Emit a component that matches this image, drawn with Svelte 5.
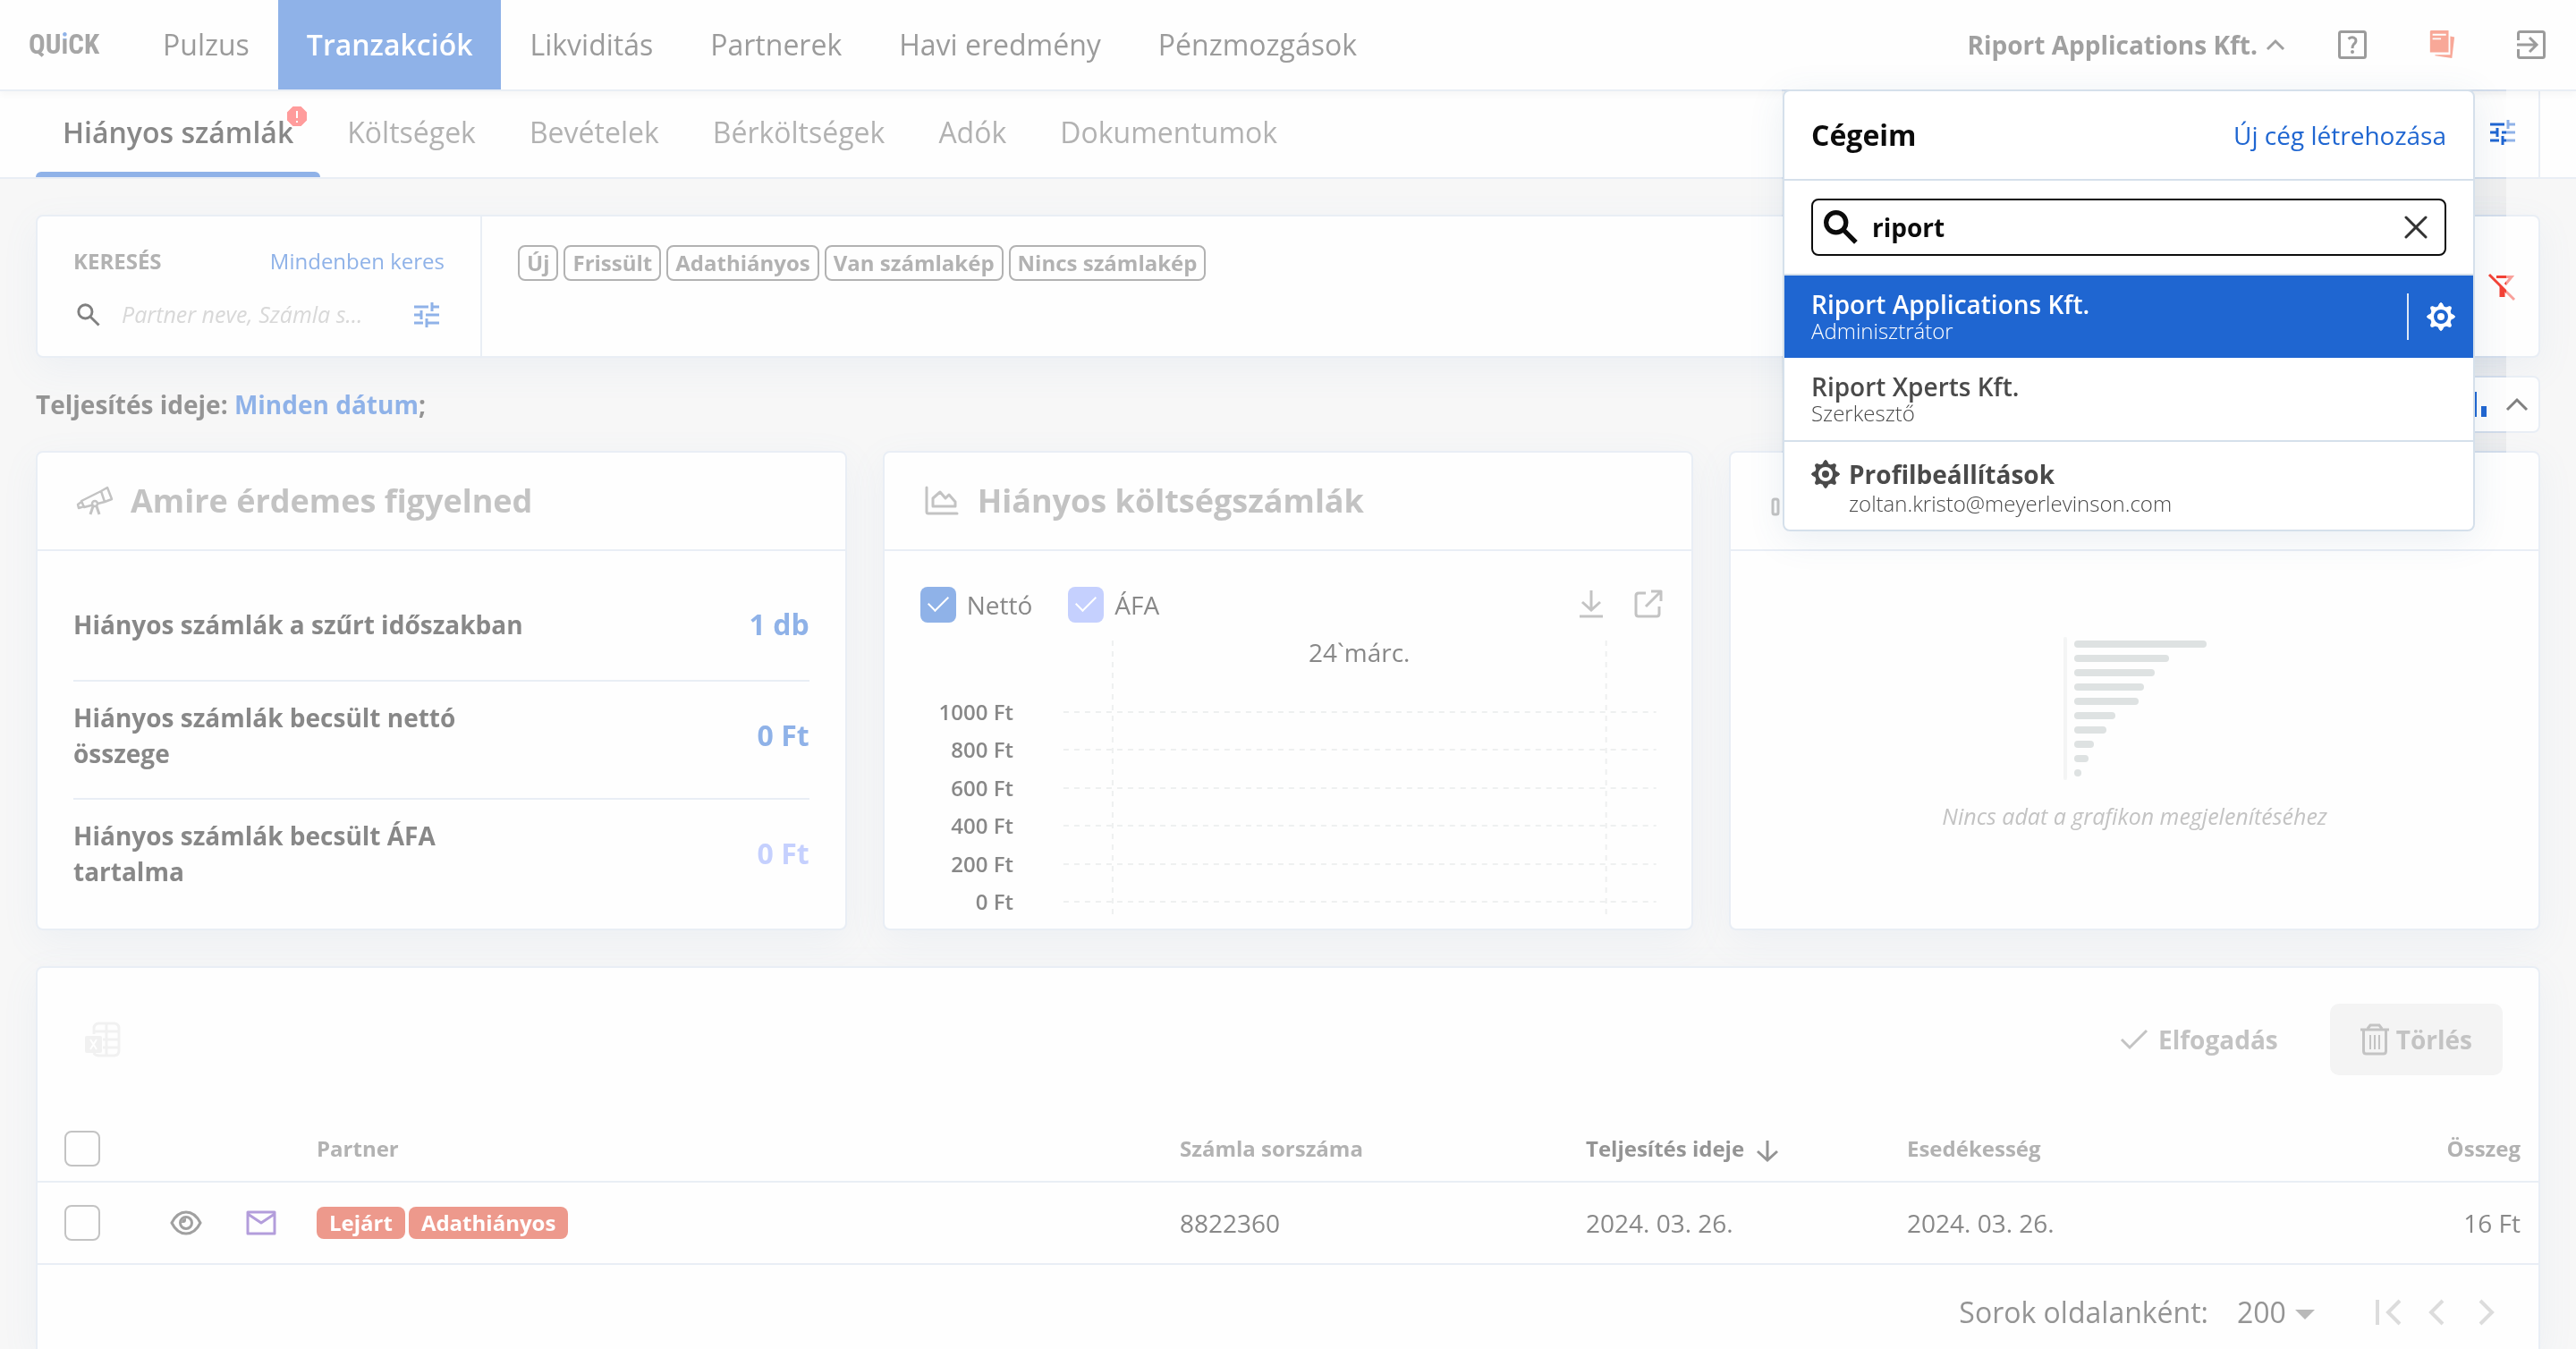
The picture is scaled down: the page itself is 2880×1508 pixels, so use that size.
<script lang="ts">
  const mainNav = ["Pulzus", "Tranzakciók", "Likviditás", "Partnerek", "Havi eredmény", "Pénzmozgások"];
  const subNav = ["Hiányos számlák", "Költségek", "Bevételek", "Bérköltségek", "Adók", "Dokumentumok"];
  const filterTags = ["Új", "Frissült", "Adathiányos", "Van számlakép", "Nincs számlakép"];

  const stats = [
    { label: "Hiányos számlák a szűrt időszakban", value: "1 db", light: false },
    { label: "Hiányos számlák becsült nettó összege", value: "0 Ft", light: false },
    { label: "Hiányos számlák becsült ÁFA tartalma", value: "0 Ft", light: true },
  ];

  const gridLines = [
    { label: "1000 Ft", y: 80 },
    { label: "800 Ft", y: 122 },
    { label: "600 Ft", y: 165 },
    { label: "400 Ft", y: 207 },
    { label: "200 Ft", y: 250 },
    { label: "0 Ft", y: 292 },
  ];

  const emptyBars = [148, 106, 90, 78, 72, 46, 36, 22, 16, 8];
  const teeth = [0, 45, 90, 135, 180, 225, 270, 315];

  const companies = [
    { name: "Riport Applications Kft.", role: "Adminisztrátor", active: true },
    { name: "Riport Xperts Kft.", role: "Szerkesztő", active: false },
  ];

  let companyQuery = $state("riport");
  let search = $state("");
  let net = $state(true);
  let vat = $state(true);
  let pageSize = $state("200");
</script>

{#snippet sliders()}
  <svg class="icon-28" viewBox="0 0 28 28" fill="none" stroke="currentColor" stroke-width="3" aria-hidden="true">
    <path d="M0 5h16M20 5h8M20 0v10M0 14h9M13 14h15M8 9v10M0 23h10M14 23h14M14 18v10" />
  </svg>
{/snippet}

{#snippet gear()}
  <svg class="icon-32" viewBox="0 0 32 32" fill="none" stroke="currentColor" aria-hidden="true">
    {#each teeth as angle}
      <path d="M13 5L14.5 1.5Q16 -.5 17.5 1.5L19 5Z" fill="currentColor" stroke-width="1" transform="rotate({angle} 16 16)" />
    {/each}
    <circle cx="16" cy="16" r="10" stroke-width="4" />
    <circle cx="16" cy="16" r="4" fill="currentColor" stroke="none" />
  </svg>
{/snippet}

{#snippet magnifier(width)}
  <svg viewBox="0 0 36 36" fill="none" stroke="currentColor" stroke-width={width} aria-hidden="true">
    <circle cx="13" cy="13" r="10.5" />
    <path d="M21 21L34 34" />
  </svg>
{/snippet}

<div class="page">
  <header class="topbar">
    <a class="logo" href="#home" aria-label="QUiCK">QU<span class="logo-i">i</span>CK</a>
    <nav class="main-nav">
      {#each mainNav as item}
        <a href="#{item}" class:active={item === "Tranzakciók"}>{item}</a>
      {/each}
    </nav>
    <button class="company-btn">
      Riport Applications Kft.
      <svg width="20" height="12" viewBox="0 0 20 12" fill="none" stroke="currentColor" stroke-width="3" aria-hidden="true">
        <path d="M1 11L10 2L19 11" />
      </svg>
    </button>
    <button class="top-icon" aria-label="Súgó">
      <svg class="icon-32" viewBox="0 0 32 32" fill="none" stroke="currentColor" stroke-width="3" aria-hidden="true">
        <rect x="1.5" y="1.5" width="29" height="29" rx="2" />
        <path d="M11.5 9.5Q16 6 19.5 9.5Q21 13 17.5 15.5Q16 17 16 20" />
        <circle cx="16" cy="24" r="1" stroke-width="2" />
      </svg>
    </button>
    <button class="top-icon news" aria-label="Hírek">
      <svg class="icon-32" viewBox="0 0 32 34" fill="currentColor" aria-hidden="true">
        <path fill-rule="evenodd" d="M3 0H24V26H2V1ZM5 4V6H21V4ZM5 9V11H15V9Z" />
        <path d="M26 7L31 8L28 33L8 30V29H26Z" />
      </svg>
    </button>
    <button class="top-icon" aria-label="Kijelentkezés">
      <svg class="icon-32" viewBox="0 0 32 32" fill="none" stroke="currentColor" stroke-width="3" aria-hidden="true">
        <path d="M1.5 11V3.5Q1.5 1.5 3.5 1.5H28.5Q30.5 1.5 30.5 3.5V28.5Q30.5 30.5 28.5 30.5H3.5Q1.5 30.5 1.5 28.5V21" />
        <path d="M0 16H22M14 8L22 16L14 24" />
      </svg>
    </button>
  </header>

  <div class="subbar">
    <nav class="sub-nav">
      {#each subNav as item, i}
        <a href="#{item}" class:active={i === 0}>
          {item}
          {#if i === 0}
            <svg class="badge" width="28" height="28" viewBox="0 0 28 28" aria-hidden="true">
              <path d="M9 2H19L26 9V19L19 26H9L2 19V9Z" fill="#ff9c9c" stroke="#fff" stroke-width="2" stroke-linejoin="round" />
              <path d="M14 8V16M14 19V21" stroke="#fff" stroke-width="2" />
            </svg>
          {/if}
        </a>
      {/each}
    </nav>
    <button class="sub-settings" aria-label="Oldal beállításai">{@render sliders()}</button>
  </div>

  <main>
    <section class="card filter">
      <div class="filter-search">
        <div class="filter-head">
          <label for="partner-search">KERESÉS</label>
          <a href="#all">Mindenben keres</a>
        </div>
        <div class="filter-row">
          <span class="small-mag">{@render magnifier(4)}</span>
          <input id="partner-search" type="text" bind:value={search} placeholder="Partner neve, Számla s…" />
          <button class="blue" aria-label="Keresés beállításai">{@render sliders()}</button>
        </div>
      </div>
      <div class="tags">
        {#each filterTags as tag}
          <button class="tag">{tag}</button>
        {/each}
      </div>
      <button class="filter-off" aria-label="Szűrők törlése">
        <svg width="30" height="30" viewBox="0 0 30 30" fill="none" stroke="currentColor" stroke-width="3" aria-hidden="true">
          <path d="M1 2L29 30M9 4.5H26L19 13" />
          <path d="M12.5 15L18.5 20V27H12.5Z" fill="currentColor" stroke="none" />
        </svg>
      </button>
    </section>

    <div class="period">
      <p>Teljesítés ideje: <a href="#date">Minden dátum</a>;</p>
      <div class="card chart-toggle">
        <button class="blue" aria-label="Grafikonok">
          <svg width="28" height="28" viewBox="0 0 28 28" fill="currentColor" aria-hidden="true">
            <path d="M0 12H6V28H0ZM11 0H17V28H11ZM22 16H28V28H22Z" />
          </svg>
        </button>
        <button aria-label="Összecsukás">
          <svg width="24" height="14" viewBox="0 0 24 14" fill="none" stroke="currentColor" stroke-width="3" aria-hidden="true">
            <path d="M1 13L12 2L23 13" />
          </svg>
        </button>
      </div>
    </div>

    <div class="cards">
      <section class="card">
        <h2>
          <svg width="40" height="40" viewBox="0 0 40 40" fill="none" stroke="currentColor" stroke-width="2.5" stroke-linejoin="round" aria-hidden="true">
            <path d="M5 20L27 9L31 21L8 27ZM27 9L34 5L39 18L31 21M27 9L31 21M5 21L1 24L2 28L8 26" />
            <circle cx="20" cy="23" r="3" fill="#fff" />
            <path d="M18 26L15 35M22 26L25 35" stroke-width="3" />
          </svg>
          Amire érdemes figyelned
        </h2>
        <ul class="stats">
          {#each stats as stat}
            <li>
              <span>{stat.label}</span>
              <strong class:light={stat.light}>{stat.value}</strong>
            </li>
          {/each}
        </ul>
      </section>

      <section class="card">
        <h2>
          <svg width="40" height="40" viewBox="0 0 40 40" fill="none" stroke="currentColor" stroke-width="3" stroke-linecap="round" stroke-linejoin="round" aria-hidden="true">
            <path d="M3 5V32Q3 34 5 34H37M10 26V17L18 10L24 17L28 13L35 21V26Z" />
          </svg>
          Hiányos költségszámlák
        </h2>
        <div class="chart-body">
          <div class="legend">
            <label><input type="checkbox" class="net" bind:checked={net} />Nettó</label>
            <label><input type="checkbox" class="vat" bind:checked={vat} />ÁFA</label>
            <button aria-label="Letöltés">
              <svg class="icon-32" viewBox="0 0 32 32" fill="none" stroke="currentColor" stroke-width="3" aria-hidden="true">
                <path d="M16 0V22M6 13L16 22L26 13M3 29H29" />
              </svg>
            </button>
            <button aria-label="Megnyitás">
              <svg class="icon-32" viewBox="0 0 32 32" fill="none" stroke="currentColor" stroke-width="3" stroke-linejoin="round" aria-hidden="true">
                <path d="M13 3H5Q2 3 2 6V26Q2 29 5 29H25Q28 29 28 26V18M19 1H30V12M30 1L13 18" />
              </svg>
            </button>
          </div>
          <svg class="chart" viewBox="0 0 823 306" role="img" aria-label="Hiányos költségszámlák grafikon">
            <g stroke="#eef0f0" stroke-width="2">
              <path d="M215 0V306M767 0V306" stroke-dasharray="6 6" />
              {#each gridLines as line}
                <path d="M160 {line.y}H823" stroke-dasharray="6 6" />
              {/each}
            </g>
            <text class="month" x="491" y="24" text-anchor="middle">24`márc.</text>
            {#each gridLines as line}
              <text class="tick" x="104" y={line.y + 9} text-anchor="end">{line.label}</text>
            {/each}
          </svg>
        </div>
      </section>

      <section class="card">
        <h2>
          <svg width="40" height="40" viewBox="0 0 40 40" fill="none" stroke="currentColor" stroke-width="3" aria-hidden="true">
            <rect x="3" y="18" width="6" height="17" rx="2" />
            <rect x="17" y="10" width="6" height="25" rx="2" />
            <rect x="31" y="4" width="6" height="31" rx="2" />
          </svg>
        </h2>
        <div class="empty">
          <svg width="160" height="160" viewBox="0 0 160 160" fill="#dee2e2" aria-hidden="true">
            <rect width="4" height="160" rx="2" fill="#f4f5f5" />
            {#each emptyBars as width, i}
              <rect x="12" y={4 + i * 16} {width} height="8" rx="4" />
            {/each}
          </svg>
          <p>Nincs adat a grafikon megjelenítéséhez</p>
        </div>
      </section>
    </div>

    <section class="card list">
      <div class="toolbar">
        <button class="excel" aria-label="Excel export">
          <svg width="40" height="40" viewBox="0 0 40 40" fill="none" stroke="currentColor" stroke-width="3" aria-hidden="true">
            <path d="M10 14V8Q10 2 16 2H32Q38 2 38 8V32Q38 38 32 38H16Q11 38 10 35M24 2V38M10 11H38M20 20H38M20 29H38" />
            <rect x="0" y="16" width="19" height="19" rx="2" fill="currentColor" stroke="none" />
            <path d="M6 20L13 31M13 20L6 31" stroke="#fff" stroke-width="2" />
          </svg>
        </button>
        <button class="accept">
          <svg width="30" height="22" viewBox="0 0 30 22" fill="none" stroke="currentColor" stroke-width="3" aria-hidden="true">
            <path d="M1 11L10 20L29 1" />
          </svg>
          Elfogadás
        </button>
        <button class="delete">
          <svg width="32" height="36" viewBox="0 0 32 36" fill="none" stroke="currentColor" stroke-width="3" aria-hidden="true">
            <path d="M0 7H32M8 6L11 2H21L24 6M3.5 8V31Q3.5 34 6.5 34H25.5Q28.5 34 28.5 31V8" />
            <path d="M11 13V29M16 13V29M21 13V29" stroke-width="2" />
          </svg>
          Törlés
        </button>
      </div>

      <table>
        <colgroup>
          <col class="c-check" />
          <col class="c-icon" />
          <col class="c-icon" />
          <col />
          <col class="c-number" />
          <col class="c-date" />
          <col class="c-amount" />
        </colgroup>
        <thead>
          <tr>
            <th class="check"><input type="checkbox" aria-label="Összes kijelölése" /></th>
            <th></th>
            <th></th>
            <th>Partner</th>
            <th>Számla sorszáma</th>
            <th class="sorted">
              Teljesítés ideje
              <svg width="24" height="24" viewBox="0 0 24 24" fill="none" stroke="currentColor" stroke-width="3" aria-hidden="true">
                <path d="M12 0V22M1 12L12 22L23 12" />
              </svg>
            </th>
            <th>
              <div class="split"><span>Esedékesség</span><span>Összeg</span></div>
            </th>
          </tr>
        </thead>
        <tbody>
          <tr>
            <td class="check"><input type="checkbox" aria-label="Sor kijelölése" /></td>
            <td class="center">
              <svg width="36" height="28" viewBox="0 0 36 28" fill="none" stroke="currentColor" stroke-width="3" aria-hidden="true">
                <path d="M2 14Q8 2 18 2T34 14Q28 26 18 26T2 14Z" />
                <circle cx="18" cy="14" r="6.5" />
                <path d="M13 14A5 5 0 0 1 18 9V11A3 3 0 0 1 15 14Z" fill="currentColor" stroke="none" />
              </svg>
            </td>
            <td class="center mail">
              <svg width="34" height="28" viewBox="0 0 34 28" fill="none" stroke="currentColor" stroke-width="3" stroke-linejoin="round" aria-hidden="true">
                <path d="M2 2H32V26H2ZM2 4L17 14L32 4" />
              </svg>
            </td>
            <td>
              <div class="labels"><span class="label">Lejárt</span><span class="label">Adathiányos</span></div>
            </td>
            <td>8822360</td>
            <td>2024. 03. 26.</td>
            <td>
              <div class="split"><span>2024. 03. 26.</span><span>16 Ft</span></div>
            </td>
          </tr>
        </tbody>
      </table>

      <div class="pager">
        <label for="page-size">Sorok oldalanként:</label>
        <div class="page-size">
          <select id="page-size" bind:value={pageSize}>
            <option>50</option>
            <option>100</option>
            <option>200</option>
          </select>
          <svg width="22" height="11" viewBox="0 0 22 11" fill="currentColor" aria-hidden="true"><path d="M0 2H22L11 13Z" /></svg>
        </div>
        <div class="pager-buttons">
          <button aria-label="Első oldal">
            <svg width="28" height="28" viewBox="0 0 28 28" fill="none" stroke="currentColor" stroke-width="4" aria-hidden="true"><path d="M2 0V28M27 1L14 14L27 27" /></svg>
          </button>
          <button aria-label="Előző oldal">
            <svg width="16" height="28" viewBox="0 0 16 28" fill="none" stroke="currentColor" stroke-width="4" aria-hidden="true"><path d="M15 1L2 14L15 27" /></svg>
          </button>
          <button aria-label="Következő oldal">
            <svg width="16" height="28" viewBox="0 0 16 28" fill="none" stroke="currentColor" stroke-width="4" aria-hidden="true"><path d="M1 1L14 14L1 27" /></svg>
          </button>
        </div>
      </div>
    </section>
  </main>

  <!-- keeps the area around the open menu at full contrast -->
  <div class="menu-backdrop"></div>

  <div class="company-menu">
    <div class="menu-head">
      <h3>Cégeim</h3>
      <a href="#new-company">Új cég létrehozása</a>
    </div>
    <div class="menu-search">
      <div class="search-box">
        {@render magnifier(5)}
        <input type="text" aria-label="Cég keresése" bind:value={companyQuery} />
        <button aria-label="Törlés" onclick={() => (companyQuery = "")}>
          <svg width="24" height="24" viewBox="0 0 24 24" stroke="currentColor" stroke-width="3" stroke-linecap="round" aria-hidden="true"><path d="M1 1L23 23M23 1L1 23" /></svg>
        </button>
      </div>
    </div>
    {#each companies as company}
      <div class="company" class:active={company.active}>
        <a href="#{company.name}">
          <span class="name">{company.name}</span>
          <span class="role">{company.role}</span>
        </a>
        {#if company.active}
          <button class="company-settings" aria-label="Cég beállításai">{@render gear()}</button>
        {/if}
      </div>
    {/each}
    <a class="profile" href="#profile">
      {@render gear()}
      <span>
        <span class="profile-title">Profilbeállítások</span>
        <span class="role">zoltan.kristo@meyerlevinson.com</span>
      </span>
    </a>
  </div>
</div>

<style>
  :global(body) {
    margin: 0;
    background: #f7f7f7;
  }

  .page {
    --line: #e9eef5;
    --menu-line: #d5e0eb;
    --blue: #8fb2e8;
    --brand: #1f66d1;
    position: relative;
    isolation: isolate;
    display: flex;
    flex-direction: column;
    min-height: 100vh;
    background: #f7f7f7;
    color: #888;
    font-family: "Open Sans", sans-serif;
    font-size: 28px;
    line-height: 40px;
  }

  .page :global(*) {
    box-sizing: border-box;
  }

  a {
    color: var(--blue);
    text-decoration: none;
  }

  button,
  input,
  select {
    margin: 0;
    padding: 0;
    border: none;
    background: none;
    color: inherit;
    font: inherit;
  }

  button {
    display: flex;
    align-items: center;
    cursor: pointer;
  }

  h2,
  h3,
  p,
  ul {
    margin: 0;
    padding: 0;
  }

  svg {
    flex-shrink: 0;
    overflow: visible;
  }

  .icon-28 {
    width: 28px;
    height: 28px;
  }

  .icon-32 {
    width: 32px;
    height: 32px;
  }

  .blue {
    color: var(--blue);
  }

  .card {
    background: #fefefe;
    border: 2px solid var(--line);
    border-radius: 8px;
    box-shadow: 0 12px 40px rgba(120, 150, 200, 0.08);
  }

  /* top bar */
  .topbar {
    position: relative;
    z-index: 1;
    display: flex;
    align-items: center;
    height: 102px;
    padding: 0 34px 0 32px;
    background: #fefefe;
    border-bottom: 2px solid var(--line);
    box-shadow: 0 4px 8px rgba(0, 0, 0, 0.03);
    color: #9b9b9b;
  }

  .logo {
    width: 118px;
    color: #a6a6a6;
    font-family: "Roboto Condensed", Roboto, sans-serif;
    font-size: 31px;
    font-weight: 700;
  }

  .logo-i {
    background: linear-gradient(var(--blue) 36%, #a6a6a6 36%);
    background-clip: text;
    color: transparent;
  }

  .main-nav {
    display: flex;
    flex: 1;
    height: 100%;
    font-size: 32px;
  }

  .main-nav a {
    display: flex;
    align-items: center;
    padding: 0 32px;
    color: #9b9b9b;
  }

  .main-nav a.active {
    background: var(--blue);
    color: #fff;
    font-weight: 600;
  }

  .company-btn {
    gap: 10px;
    margin-right: 60px;
    font-weight: 700;
    color: #a0a0a0;
  }

  .top-icon {
    margin-right: 68px;
  }

  .top-icon:last-child {
    margin-right: 0;
  }

  .news {
    color: #f8a898;
  }

  /* sub navigation */
  .subbar {
    display: flex;
    justify-content: space-between;
    height: 98px;
    padding: 0 40px;
    background: #fefefe;
    border-bottom: 2px solid var(--line);
  }

  .sub-nav {
    display: flex;
    font-size: 32px;
  }

  .sub-nav a {
    position: relative;
    display: flex;
    align-items: center;
    padding: 0 30px;
    border-top: 2px solid transparent;
    border-bottom: 6px solid transparent;
    color: #b2b2b2;
  }

  .sub-nav a.active {
    color: #888;
    font-weight: 600;
  }

  .sub-nav a.active::after {
    content: "";
    position: absolute;
    right: 0;
    bottom: -6px;
    left: 0;
    height: 6px;
    border-radius: 6px 6px 0 0;
    background: var(--blue);
  }

  .badge {
    position: absolute;
    top: 12px;
    right: 12px;
  }

  .sub-settings {
    padding-right: 26px;
    padding-bottom: 4px;
    border-right: 2px solid var(--line);
    color: var(--blue);
  }

  main {
    display: flex;
    flex: 1;
    flex-direction: column;
    padding: 40px 40px 0;
  }

  /* filter */
  .filter {
    display: flex;
    height: 160px;
  }

  .filter-search {
    width: 497px;
    padding: 30px 40px 0;
    border-right: 2px solid var(--line);
    font-size: 24px;
  }

  .filter-head,
  .filter-row {
    display: flex;
    align-items: center;
    justify-content: space-between;
  }

  .filter-head label {
    color: #b2b2b2;
    font-weight: 700;
  }

  .filter-row {
    gap: 24px;
    margin-top: 20px;
    padding: 0 6px 0 4px;
    color: #808080;
  }

  .filter-row input {
    flex: 1;
    min-width: 0;
  }

  .filter-row input::placeholder {
    color: #d8d8d8;
    font-size: 25px;
    font-style: italic;
    opacity: 1;
  }

  .small-mag {
    display: flex;
    width: 26px;
    height: 26px;
  }

  .tags {
    display: flex;
    flex: 1;
    flex-wrap: wrap;
    align-content: flex-start;
    gap: 6px;
    padding: 32px 40px;
  }

  .tag {
    height: 40px;
    padding: 0 8px;
    border: 2px solid #b2b2b2;
    border-radius: 8px;
    color: #b2b2b2;
    font-size: 24px;
    font-weight: 700;
  }

  .filter-off {
    padding-right: 26px;
    color: #f9a09a;
  }

  /* period line */
  .period {
    display: flex;
    align-items: center;
    justify-content: space-between;
    padding: 20px 0;
    color: #949494;
    font-weight: 700;
  }

  .chart-toggle {
    display: flex;
    gap: 22px;
    height: 64px;
    padding: 0 12px;
    box-shadow: none;
    color: #808080;
  }

  /* cards */
  .cards {
    display: grid;
    grid-template-columns: repeat(3, 1fr);
    gap: 40px;
  }

  .cards .card {
    display: flex;
    flex-direction: column;
    min-width: 0;
  }

  h2 {
    display: flex;
    align-items: center;
    gap: 20px;
    height: 110px;
    padding: 0 44px;
    border-bottom: 2px solid var(--line);
    color: #c3c3c3;
    font-size: 36px;
    font-weight: 700;
  }

  .stats {
    padding: 30px 40px 14px;
    list-style: none;
    font-weight: 700;
  }

  .stats li {
    display: flex;
    align-items: center;
    justify-content: space-between;
    min-height: 116px;
    padding: 20px 0 30px;
    border-bottom: 2px solid var(--line);
  }

  .stats li:last-child {
    border-bottom: none;
  }

  .stats span {
    max-width: 520px;
  }

  .stats strong {
    color: var(--blue);
    font-size: 32px;
    font-weight: 700;
  }

  .stats strong.light {
    color: #c5d0fe;
  }

  .chart-body {
    padding: 40px 40px 16px;
  }

  .legend {
    display: flex;
    align-items: center;
    gap: 32px;
    margin: 0 -8px 20px 0;
  }

  .legend label {
    display: flex;
    align-items: center;
    gap: 12px;
    margin-right: 8px;
  }

  .legend label + button {
    margin-left: auto;
  }

  .legend button {
    color: #c3c3c3;
  }

  input[type="checkbox"] {
    display: block;
    width: 40px;
    height: 40px;
    appearance: none;
    border: 2px solid #c3c3c3;
    border-radius: 8px;
  }

  .legend input[type="checkbox"] {
    display: grid;
    place-items: center;
    border: none;
    background: var(--blue);
  }

  .legend input[type="checkbox"].vat {
    background: #c5d0fe;
  }

  .legend input:checked::before {
    content: "";
    width: 20px;
    height: 10px;
    margin-bottom: 8px;
    border-bottom: 2px solid #fff;
    border-left: 2px solid #fff;
    transform: rotate(-45deg);
  }

  .chart {
    display: block;
    width: 100%;
  }

  .chart text {
    fill: #888;
  }

  .month {
    font-size: 28px;
  }

  .tick {
    font-size: 24px;
    font-weight: 600;
  }

  .empty {
    display: flex;
    flex: 1;
    flex-direction: column;
    align-items: center;
    justify-content: center;
    gap: 20px;
    padding-bottom: 10px;
    color: #c3c3c3;
    font-size: 25px;
    font-style: italic;
  }

  /* invoice list */
  .list {
    flex: 1;
    margin-top: 40px;
    border-bottom: none;
    border-radius: 8px 8px 0 0;
  }

  .toolbar {
    display: flex;
    align-items: center;
    height: 166px;
    padding: 0 40px 6px 53px;
    color: #c3c3c3;
    font-weight: 700;
  }

  .excel {
    margin-right: auto;
    color: #f1f1f1;
  }

  .toolbar .accept {
    gap: 12px;
    margin-right: 58px;
    font-weight: 700;
  }

  .delete {
    gap: 8px;
    height: 80px;
    padding: 0 34px;
    border-radius: 10px;
    background: #f4f4f4;
  }

  table {
    width: 100%;
    table-layout: fixed;
    border-spacing: 0;
    text-align: left;
  }

  th,
  td {
    padding: 0 20px;
    border-bottom: 2px solid var(--line);
  }

  th {
    height: 74px;
    color: #b2b2b2;
    font-size: 24px;
    font-weight: 700;
  }

  td {
    height: 92px;
  }

  .c-check {
    width: 124px;
  }

  .c-icon {
    width: 84px;
  }

  .c-number {
    width: 454px;
  }

  .c-date {
    width: 359px;
  }

  .c-amount {
    width: 726px;
  }

  .check {
    padding-left: 30px;
  }

  .center {
    padding: 0;
    color: #a0a0a0;
    text-align: center;
  }

  .center svg {
    display: block;
    margin: 0 auto;
  }

  .mail {
    color: #b39ddb;
  }

  .sorted {
    color: #949494;
  }

  .sorted svg {
    margin-left: 8px;
    vertical-align: middle;
  }

  .split {
    display: flex;
    justify-content: space-between;
  }

  .labels {
    display: flex;
    gap: 4px;
  }

  .label {
    padding: 0 14px;
    border-radius: 8px;
    background: #ed998c;
    color: #fff;
    font-size: 24px;
    font-weight: 700;
    line-height: 36px;
  }

  .pager {
    display: flex;
    align-items: center;
    justify-content: flex-end;
    height: 94px;
    padding: 12px 50px 0 0;
    font-size: 32px;
    color: #949494;
  }

  .page-size {
    display: flex;
    align-items: center;
    gap: 10px;
    margin: 0 68px 0 32px;
  }

  .page-size select {
    appearance: none;
  }

  .page-size svg {
    color: #b9b9b9;
  }

  .pager-buttons {
    display: flex;
    gap: 32px;
    color: #dcdcdc;
  }

  .pager-buttons button:last-child {
    margin-left: 8px;
  }

  /* company menu */
  .menu-backdrop {
    position: absolute;
    z-index: 2;
    top: 100px;
    right: 78px;
    width: 810px;
    height: 406px;
    background: #808080;
    mix-blend-mode: color-burn;
    pointer-events: none;
  }

  .company-menu {
    position: absolute;
    z-index: 3;
    top: 100px;
    right: 113px;
    width: 774px;
    border: 2px solid var(--menu-line);
    border-radius: 8px;
    background: #fff;
    box-shadow: 0 8px 40px rgba(60, 110, 150, 0.1);
    color: #4a4a4a;
  }

  .menu-head {
    display: flex;
    align-items: center;
    justify-content: space-between;
    height: 100px;
    padding: 0 30px;
    border-bottom: 2px solid var(--menu-line);
  }

  h3 {
    color: #0c0c0c;
    font-size: 32px;
    font-weight: 700;
  }

  .menu-head a {
    color: var(--brand);
  }

  .menu-search {
    padding: 20px 30px;
    border-bottom: 2px solid var(--menu-line);
  }

  .search-box {
    display: flex;
    align-items: center;
    height: 64px;
    padding: 0 20px 0 12px;
    border: 2px solid #0c0c0c;
    border-radius: 8px;
    color: #0c0c0c;
  }

  .search-box > :global(svg) {
    width: 38px;
    height: 38px;
  }

  .search-box input {
    flex: 1;
    min-width: 0;
    margin-left: 16px;
    outline: none;
    font-weight: 700;
  }

  .search-box button {
    color: #333;
  }

  .company {
    display: flex;
    align-items: center;
    height: 92px;
    padding: 0 20px 0 30px;
  }

  .company a {
    flex: 1;
    color: inherit;
  }

  .company.active {
    background: var(--brand);
    color: #fff;
  }

  .name,
  .role,
  .profile-title {
    display: block;
    line-height: 32px;
  }

  .name {
    font-weight: 600;
  }

  .role {
    font-size: 24px;
    font-weight: 300;
    line-height: 28px;
  }

  .company-settings {
    height: 52px;
    padding-left: 20px;
    border-left: 2px solid #dfe8f5;
  }

  .profile {
    display: flex;
    gap: 10px;
    padding: 20px 30px 12px;
    border-top: 2px solid var(--menu-line);
    color: #4a4a4a;
  }

  .profile-title {
    font-weight: 700;
  }

  .profile .role {
    line-height: 34px;
  }
</style>
